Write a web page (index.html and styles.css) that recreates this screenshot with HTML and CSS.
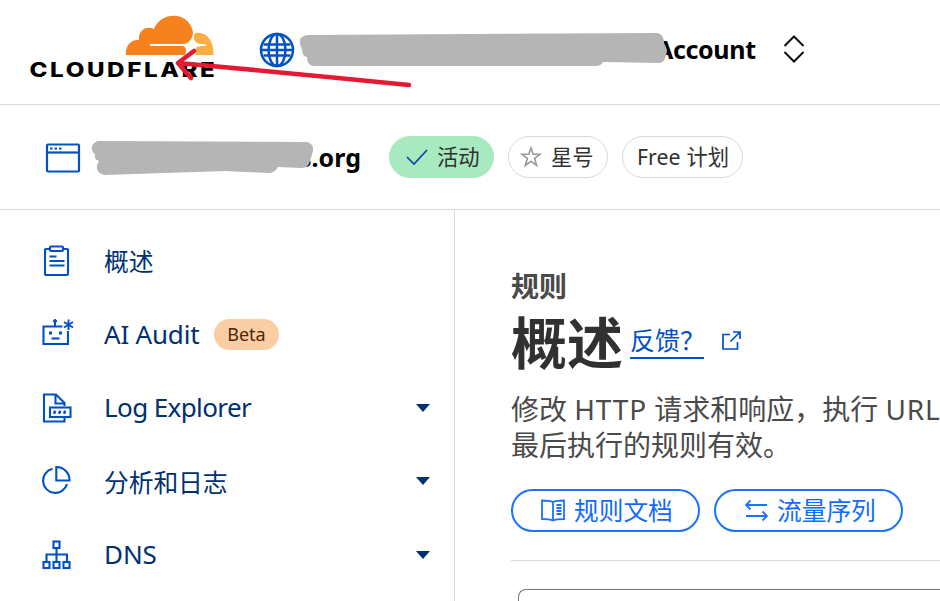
FILE: index.html
```html
<!DOCTYPE html>
<html lang="zh-CN">
<head>
<meta charset="utf-8">
<title>Cloudflare</title>
<link rel="stylesheet" href="styles.css">
</head>
<body>
<header class="topbar">
  <svg class="logo" width="190" height="70" viewBox="28 12 190 70">
    <path fill="#f6821f" d="M126 55C125 46 131 39 139 40C138 32 145 25 154 29C161 11 189 11 193 32C193 37 190 43 184 44H150V46H183C186 47 187 50 185 55Z"/>
    <path fill="#fbad41" d="M195 33C206 31 214 40 213.500 55H196C195 52 195 49 197 47C199 46 202 46 206 46V44.500C201 44 197 44 195 41C193 38 194 35 195 33Z"/>
    <g transform="translate(29.500 77) scale(1.180 1)"><text class="wordmark" textLength="157" lengthAdjust="spacing">CLOUDFLARE</text></g>
  </svg>
  <svg class="globe" width="36" height="36" viewBox="0 0 36 36" fill="none" stroke="#0051c3" stroke-width="2.500">
    <circle cx="18" cy="18" r="16"/><ellipse cx="18" cy="18" rx="8.5" ry="16"/><path d="M18 2V34M2 18H34M4.500 12.500H31.500M4.500 23.500H31.500"/>
  </svg>
  <span class="account">Account</span>
  <svg class="updown" width="22" height="28" viewBox="0 0 22 28" fill="none" stroke="#111" stroke-width="2"><path d="M1.500 11L11 1.500L20.500 11M1.500 17L11 26.500L20.500 17"/></svg>
</header>
<section class="zonebar">
  <svg class="window" width="36" height="30" viewBox="0 0 36 30" fill="none" stroke="#0051c3" stroke-width="2.200"><rect x="2" y="1.500" width="32" height="27" rx="1"/><path d="M2 9.500H34"/><path d="M5 5.500H17" stroke-dasharray="2.500 2"/></svg>
  <span class="zone">s.org</span>
  <div class="pill active"><svg width="22" height="18" viewBox="0 0 22 18" fill="none" stroke="#0845a5" stroke-width="1.700"><path d="M1 9L8 16L21 2"/></svg><span>活动</span></div>
  <div class="pill star"><svg width="22" height="22" viewBox="0 0 22 22" fill="none" stroke="#999" stroke-width="1.600"><path d="M11 2L13.200 8.300H20L14.600 12.300L16.700 19.500L11 15.300L5.300 19.500L7.400 12.300L2 8.300H8.800Z"/></svg><span>星号</span></div>
  <div class="pill plan"><span>Free</span><span>计划</span></div>
</section>
<div class="body">
  <nav class="sidebar">
    <a class="item"><svg width="34" height="32" viewBox="0 0 34 32"><rect x="3" y="4" width="23" height="26" rx="1"/><rect x="8" y="1.500" width="13" height="4.500" rx="1" fill="#fff"/><path d="M7.500 11.500H14.500M7.500 16H22.500M7.500 20.500H22.500"/></svg><span class="cjk">概述</span></a>
    <a class="item"><svg width="34" height="32" viewBox="0.500 0 34 32"><path d="M21 8.500H2V26H26.500V13M13.500 8V3"/><path d="M27 1.500V12M22.500 4L31.500 9.500M31.500 4L22.500 9.500" stroke-width="1.900"/><circle cx="13.500" cy="3" r="1.500" fill="#0051c3" stroke-width="1"/><path d="M7.500 15H10.500M17.500 15H20.500" stroke-width="3"/><path d="M10 20.500H18"/></svg><span class="audit">AI Audit</span><b class="beta">Beta</b></a>
    <a class="item"><svg width="34" height="32" viewBox="0.500 0 34 32"><path d="M23 14V11L14.500 2.500H2.500V29.500H23V25M14 3V11.500H23"/><rect x="8.500" y="15.500" width="20.500" height="9.500"/><path d="M12.500 21.700L13.700 18.800M17.500 21.700L18.700 18.800M22.500 21.700L23.700 18.800" stroke-width="2.500"/></svg><span class="log">Log Explorer</span><i></i></a>
    <a class="item"><svg width="34" height="32" viewBox="0.500 0 34 32"><path d="M11 3.800A12.200 12.200 0 1 0 25.500 19"/><path d="M14.800 2V15.500H28A13 13 0 0 0 14.800 2Z"/></svg><span class="cjk">分析和日志</span><i></i></a>
    <a class="item"><svg width="34" height="32" viewBox="0 0 34 32"><path d="M14.500 9V23M4.500 23V15.500H25V23"/><rect x="11.500" y="2.500" width="6" height="6.500"/><rect x="1.500" y="23" width="6" height="6"/><rect x="11.500" y="23" width="6" height="6"/><rect x="21.500" y="23" width="6" height="6"/></svg><span>DNS</span><i></i></a>
  </nav>
  <main class="main">
    <div class="eyebrow">规则</div>
    <div class="title"><h1>概述</h1><a class="feedback">反馈？</a><svg width="20" height="20" viewBox="0 0 20 20" fill="none" stroke="#0051c3" stroke-width="1.700"><path d="M9 3.500H2V18H16.500V11M12 1H19V8M18.500 1.500L9.500 10.500"/></svg></div>
    <p class="desc">修改 <span class="lat">HTTP</span> 请求和响应，执行 <span class="lat">URL</span><br>最后执行的规则有效。</p>
    <div class="buttons">
      <a class="btn"><svg width="26" height="26" viewBox="0 0 26 26"><path d="M13 4C10 2.500 6 2.500 2 2.500V21C6 21 10 21 13 22.500C16 21 20 21 24 21V2.500C20 2.500 16 2.500 13 4ZM13 4V22.500M16.500 7H21.500M16.500 10H21.500M16.500 13H21.500M16.500 16H21.500"/></svg><span>规则文档</span></a>
      <a class="btn"><svg width="26" height="26" viewBox="0 0 26 26"><path d="M24 7H3M7.500 2.500L3 7L7.500 11.500M3 18H24M19.500 13.500L24 18L19.500 22.500"/></svg><span>流量序列</span></a>
    </div>
    <hr>
    <div class="card"></div>
  </main>
</div>
<svg class="marks" width="940" height="210" viewBox="0 0 940 210">
  <path fill="#b5b5b5" d="M307 35L657 33Q664 34 664 43L667 50Q666 62 660 63L603 62Q601 66 596 66L313 66Q307 65 307 57Q302 56 302 49Q299 44 300 39Q302 36 307 35Z"/>
  <path fill="#b5b5b5" d="M98 141L307 142Q314 144 313 151L309 164Q307 168 301 168L278 167Q275 173 268 173L225 171L104 175Q96 173 97 165L99 161Q94 160 95 154Q91 152 92 146Q94 142 98 141Z"/>
  <path fill="none" stroke="#e61932" stroke-width="4.500" stroke-linecap="round" stroke-linejoin="round" d="M409 85Q290 73 178 63M194 51L178 63L191 78"/>
</svg>
</body>
</html>
```
FILE: styles.css
```css
* { box-sizing: border-box; }
body {
  margin: 0;
  width: 940px;
  height: 601px;
  overflow: hidden;
  position: relative;
  background: #fff;
  font-family: "Noto Sans", "Noto Sans CJK SC", sans-serif;
  color: #313131;
}
svg { flex: none; display: block; }
.topbar {
  height: 105px;
  border-bottom: 1px solid #d9d9d9;
  display: flex;
  align-items: center;
  padding: 0 0 10px 28px;
}
.wordmark { font: 800 20.5px Inter, sans-serif; fill: #000; }
.globe { margin-left: 41px; margin-top: 5px; }
.account {
  margin-left: 361px;
  margin-top: 3px;
  width: 100px;
  font-size: 25px;
  font-weight: 700;
  color: #000;
  white-space: nowrap;
  letter-spacing: -0.35px;
}
.updown { margin-left: 27px; margin-top: 4px; }
.zonebar {
  height: 105px;
  border-bottom: 1px solid #d9d9d9;
  display: flex;
  align-items: center;
  padding-left: 45px;
}
.window { margin-top: 2px; }
.zone {
  width: 65px;
  margin-left: 218px;
  margin-right: 25px;
  font-size: 25px;
  font-weight: 700;
  color: #000;
  white-space: nowrap;
}
.pill {
  height: 42px;
  border: 1px solid #d9d9d9;
  border-radius: 21px;
  display: flex;
  align-items: center;
  font-size: 21.3px;
  line-height: 40px;
  white-space: nowrap;
  margin-right: 14px;
}
.active { width: 105px; background: #a9e9bf; border-color: #a9e9bf; padding-left: 16px; gap: 9px; }
.star { width: 100px; padding-left: 11px; gap: 9px; }
.plan { width: 121px; padding-left: 14px; gap: 6px; }
.body { display: flex; height: 391px; }
.sidebar {
  width: 455px;
  flex: none;
  border-right: 1px solid #d9d9d9;
  padding-top: 14px;
}
.item {
  height: 73.5px;
  display: flex;
  align-items: center;
  padding: 0 24px 0 42px;
  color: #003070;
  font-size: 26px;
  white-space: nowrap;
}
.item svg { fill: none; stroke: #0051c3; stroke-width: 2.1; overflow: visible; }
.item span { margin: -2px 0 0 28px; letter-spacing: -0.1px; }
.item .cjk { font-size: 24.8px; margin-top: -1px; }
.item .audit { letter-spacing: -0.2px; width: 96px; margin-top: 0; }
.item .log { letter-spacing: -0.6px; }
.item i {
  margin-left: auto;
  border: 7.5px solid transparent;
  border-top: 8px solid #003070;
  border-bottom: 0;
}
.beta {
  margin-left: 14px;
  width: 65px;
  height: 31px;
  border-radius: 16px;
  background: #fbcda5;
  color: #4d2600;
  font-size: 18px;
  font-weight: 400;
  line-height: 30px;
  text-align: center;
}
.main { flex: 1; min-width: 0; padding: 58px 0 0 56px; overflow: hidden; }
.eyebrow { font-size: 28px; font-weight: 700; line-height: 36px; color: #4a4a4a; }
.title { height: 76px; display: flex; align-items: center; }
h1 { margin: 0; font-size: 56px; line-height: 76px; font-weight: 700; }
.feedback {
  width: 74px;
  height: 35px;
  margin-left: 7px;
  margin-top: -2px;
  border-bottom: 2px solid #0051c3;
  color: #0051c3;
  font-size: 25px;
  line-height: 33px;
  white-space: nowrap;
  overflow: hidden;
}
.title svg { margin-left: 17px; margin-bottom: 3px; }
.desc { margin: 11px 0 0; font-size: 28px; line-height: 36px; white-space: nowrap; color: #4a4a4a; }
.desc .lat { letter-spacing: 0.8px; }
.buttons { display: flex; gap: 14px; margin-top: 26px; }
.btn {
  width: 189px;
  height: 43px;
  border: 2px solid #1a73ff;
  border-radius: 22px;
  display: flex;
  align-items: center;
  padding-left: 27px;
  gap: 8px;
  font-size: 24.7px;
  line-height: 39px;
  color: #0f6bff;
  white-space: nowrap;
}
.btn svg { fill: none; stroke: #1a73ff; stroke-width: 1.8; }
hr { border: 0; height: 1px; background: #d9d9d9; margin: 28px 0; }
.card { margin-left: 7px; height: 40px; border: 1px solid #777; border-right: 0; border-radius: 8px 0 0 0; }
.marks { position: absolute; left: 0; top: 0; }
```
